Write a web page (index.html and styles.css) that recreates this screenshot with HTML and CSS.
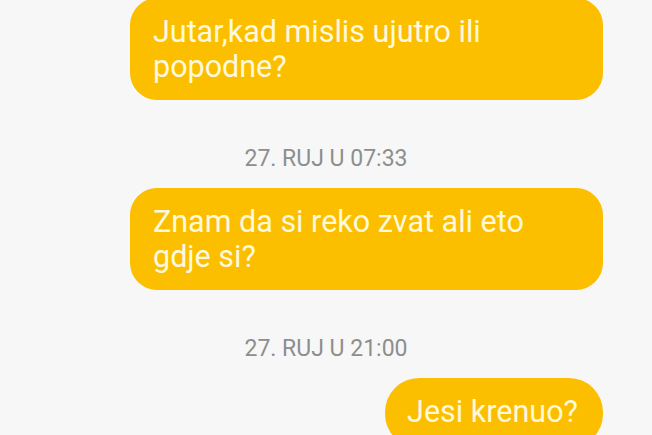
FILE: index.html
```html
<!DOCTYPE html>
<html lang="hr">
<head>
    <meta charset="UTF-8">
    <meta name="viewport" content="width=device-width, initial-scale=1.0">
    <title>Poruke</title>
    <link rel="stylesheet" href="styles.css">
</head>
<body>
    <div class="thread">
        <div class="bubble">Jutar,kad mislis ujutro ili popodne?</div>

        <div class="stamp">27. RUJ U 07:33</div>
        <div class="bubble">Znam da si reko zvat ali eto gdje si?</div>

        <div class="stamp">27. RUJ U 21:00</div>
        <div class="bubble bubble-short">Jesi krenuo?</div>
    </div>
</body>
</html>
```

FILE: styles.css
```css
:root {
    --bg-color: #f7f7f7;
    --bubble-color: #fcbf00;
    --bubble-text: #fff8dc;
    --stamp-color: #8e8e8e;
}

* {
    margin: 0;
    padding: 0;
    box-sizing: border-box;
}

body {
    font-family: Roboto, 'Liberation Sans', sans-serif;
    background-color: var(--bg-color);
    overflow: hidden;
}

.thread {
    display: flex;
    flex-direction: column;
    align-items: flex-end;
    margin-top: -2px;
    padding-right: 49px;
}

.bubble {
    max-width: 473px;
    width: 473px;
    padding: 16px 25px 16px 23px;
    background-color: var(--bubble-color);
    color: var(--bubble-text);
    font-size: 30.5px;
    line-height: 35px;
    border-radius: 27px;
}

.bubble-short {
    width: auto;
    padding: 16px 25px 16px 22px;
    border-radius: 34px;
    height: 70px;
}

.stamp {
    align-self: stretch;
    text-align: center;
    padding-left: 49px;
    margin: 45px 0 15px;
    font-size: 23px;
    line-height: 28px;
    color: var(--stamp-color);
}
```
